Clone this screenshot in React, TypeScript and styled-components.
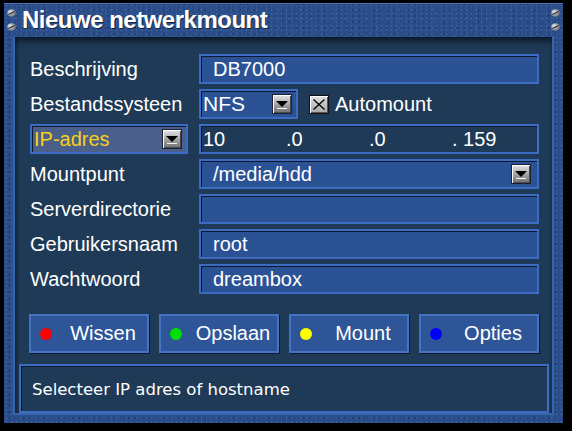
import styled, { createGlobalStyle } from "styled-components";

const GlobalStyle = createGlobalStyle`
  html, body {
    margin: 0;
    padding: 0;
    background: #000;
  }
  body {
    font-family: "Liberation Sans", Arial, sans-serif;
    color: #fff;
  }
`;

const Window = styled.div`
  width: 559px;
  height: 420px;
  margin: 3px 0 0 4px;
  box-sizing: border-box;
  padding: 0 9px 8px 9px;
  display: flex;
  flex-direction: column;
  background-color: #2a4e8b;
  background-image: radial-gradient(rgba(255, 255, 255, 0.1) 1px, transparent 1.2px),
    radial-gradient(rgba(0, 0, 0, 0.22) 1px, transparent 1.3px),
    radial-gradient(rgba(120, 160, 230, 0.12) 1px, transparent 1.5px);
  background-size: 5px 4px, 7px 6px, 11px 9px;
  background-position: 0 0, 2px 3px, 5px 1px;
  border-top: 1px solid #4a72b4;
`;

const TitleBar = styled.div`
  height: 33px;
  display: flex;
  align-items: flex-start;
  margin: 0 -6px;
`;

const ScrewColumn = styled.div`
  width: 9px;
  display: flex;
  flex-direction: column;
  gap: 6px;
  padding-top: 5px;
`;

const Title = styled.h1`
  flex: 1;
  margin: 0 0 0 6px;
  padding-top: 3px;
  font-size: 24px;
  line-height: 26px;
  font-weight: bold;
  letter-spacing: -0.5px;
  color: #fff;
  text-shadow: 1px 1px 0 rgba(0, 0, 0, 0.5);
`;

const Panel = styled.div`
  flex: 1;
  display: flex;
  flex-direction: column;
  background: #1f3a56;
  border: 2px solid #3865ad;
  border-top: none;
  padding: 17px 13px 0 15px;
  box-shadow: inset 0 7px 7px -3px rgba(5, 12, 25, 0.75), inset 2px 0 3px rgba(5, 12, 25, 0.4);
`;

const Form = styled.div`
  display: grid;
  grid-template-columns: 169px 340px;
  grid-auto-rows: 30px;
  row-gap: 5px;
`;

const Label = styled.div`
  font-size: 20px;
  line-height: 30px;
  white-space: nowrap;
  color: #fff;
`;

const Field = styled.div<{ $dark?: boolean }>`
  box-sizing: border-box;
  height: 30px;
  min-width: 0;
  display: flex;
  align-items: center;
  border: 2px solid #3c6cc2;
  background: ${(p) => (p.$dark ? "#1f3a56" : "#2c5296")};
  box-shadow: inset 1px 1px 0 #0b1830;
  padding: 0 6px 0 12px;
  font-size: 20px;
  line-height: 26px;
  color: #fff;
`;

const FieldText = styled.span`
  flex: 1;
  white-space: nowrap;
`;

const InlineRow = styled.div`
  display: flex;
  align-items: center;
`;

const Select = styled.div<{ $width: number; $active?: boolean }>`
  box-sizing: border-box;
  width: ${(p) => p.$width}px;
  height: 30px;
  display: flex;
  align-items: center;
  border: 2px solid #3c6cc2;
  background: ${(p) => (p.$active ? "#4a5f89" : "#2c5296")};
  box-shadow: inset 1px 1px 0 #0b1830;
  padding: 0 4px 0 2px;
`;

const SelectText = styled.span<{ $narrow?: boolean; $active?: boolean }>`
  flex: 1;
  font-family: ${(p) =>
    p.$narrow
      ? `"Liberation Sans Narrow", "Liberation Sans", Arial, sans-serif`
      : `"Liberation Sans", Arial, sans-serif`};
  font-size: ${(p) => (p.$narrow ? "21px" : "20px")};
  line-height: 26px;
  color: ${(p) => (p.$active ? "#f7d117" : "#fff")};
  white-space: nowrap;
`;

const ArrowButton = styled.span`
  box-sizing: border-box;
  width: 20px;
  height: 20px;
  display: flex;
  align-items: center;
  justify-content: center;
  border: 1px solid #1a2233;
  background: linear-gradient(#e6e6e6, #9a9a9a 60%, #6e6e6e);
  box-shadow: inset 1px 1px 0 #fff, inset -1px -1px 0 #4a4a4a;
`;

const CheckBox = styled.span`
  box-sizing: border-box;
  width: 20px;
  height: 19px;
  margin-left: 11px;
  display: flex;
  align-items: center;
  justify-content: center;
  border: 1px solid #111;
  background: linear-gradient(#e0e0e0, #a8a8a8);
  box-shadow: inset 1px 1px 0 #fff, inset -1px -1px 0 #555;
`;

const CheckLabel = styled.span`
  margin-left: 6px;
  font-size: 20px;
  line-height: 30px;
  color: #fff;
`;

const IpGrid = styled.div`
  flex: 1;
  min-width: 0;
  display: grid;
  grid-template-columns: 83px 83px 83px 1fr;
  margin-left: -10px;
`;

const ButtonRow = styled.div`
  display: flex;
  gap: 10px;
  margin: 20px 0 0 -1px;
`;

const Button = styled.div`
  box-sizing: border-box;
  width: 120px;
  height: 39px;
  display: flex;
  align-items: center;
  padding-left: 9px;
  background: #2e5598;
  border: 2px solid #4473c4;
  box-shadow: 1px 1px 0 #0c1a2d;
  font-size: 20px;
  color: #fff;
`;

const Dot = styled.span<{ $color: string }>`
  width: 12px;
  height: 12px;
  border-radius: 50%;
  background: ${(p) => p.$color};
  flex-shrink: 0;
`;

const ButtonText = styled.span`
  flex: 1;
  text-align: center;
  padding-left: 7px;
  white-space: nowrap;
`;

const StatusBar = styled.div`
  box-sizing: border-box;
  height: 49px;
  margin: 11px -10px 0 -11px;
  display: flex;
  align-items: center;
  padding: 2px 0 0 11px;
  border: 2px solid #3c6cc2;
  background: #1f3a56;
  box-shadow: inset 1px 1px 0 #0b1830;
  font-family: "DejaVu Sans", Verdana, sans-serif;
  font-size: 16.5px;
  color: #fff;
`;

function Screw() {
  return (
    <svg width="9" height="8" viewBox="0 0 9 8">
      <defs>
        <radialGradient id="sg" cx="35%" cy="35%" r="70%">
          <stop offset="0" stopColor="#e8e8e8" />
          <stop offset="1" stopColor="#6c7480" />
        </radialGradient>
      </defs>
      <ellipse cx="4.5" cy="4" rx="4.2" ry="3.7" fill="url(#sg)" />
      <line x1="1.5" y1="5.5" x2="7.5" y2="2.5" stroke="#2a3040" strokeWidth="1.3" />
    </svg>
  );
}

function Arrow() {
  return (
    <ArrowButton>
      <svg width="12" height="9" viewBox="0 0 12 9">
        <polygon points="0,1 12,1 6,7" fill="#000" />
        <line x1="1" y1="8.5" x2="11" y2="8.5" stroke="#f4f4f4" strokeWidth="1" />
      </svg>
    </ArrowButton>
  );
}

const buttons = [
  { label: "Wissen", color: "#ff0000" },
  { label: "Opslaan", color: "#00e000" },
  { label: "Mount", color: "#ffff00" },
  { label: "Opties", color: "#0000ff" },
];

export default function App() {
  return (
    <>
      <GlobalStyle />
      <Window>
        <TitleBar>
          <ScrewColumn>
            <Screw />
            <Screw />
          </ScrewColumn>
          <Title>Nieuwe netwerkmount</Title>
          <ScrewColumn>
            <Screw />
            <Screw />
          </ScrewColumn>
        </TitleBar>
        <Panel>
          <Form>
            <Label>Beschrijving</Label>
            <Field>
              <FieldText>DB7000</FieldText>
            </Field>

            <Label>Bestandssysteen</Label>
            <InlineRow>
              <Select $width={99}>
                <SelectText $narrow>NFS</SelectText>
                <Arrow />
              </Select>
              <CheckBox>
                <svg width="14" height="13" viewBox="0 0 14 13">
                  <line x1="1.5" y1="1.5" x2="12.5" y2="11.5" stroke="#000" strokeWidth="1.3" />
                  <line x1="12.5" y1="1.5" x2="1.5" y2="11.5" stroke="#000" strokeWidth="1.3" />
                </svg>
              </CheckBox>
              <CheckLabel>Automount</CheckLabel>
            </InlineRow>

            <Select $width={158} $active>
              <SelectText $active>IP-adres</SelectText>
              <Arrow />
            </Select>
            <Field $dark>
              <IpGrid>
                <span>10</span>
                <span>.0</span>
                <span>.0</span>
                <span>. 159</span>
              </IpGrid>
            </Field>

            <Label>Mountpunt</Label>
            <Field>
              <FieldText>/media/hdd</FieldText>
              <Arrow />
            </Field>

            <Label>Serverdirectorie</Label>
            <Field />

            <Label>Gebruikersnaam</Label>
            <Field>
              <FieldText>root</FieldText>
            </Field>

            <Label>Wachtwoord</Label>
            <Field>
              <FieldText>dreambox</FieldText>
            </Field>
          </Form>

          <ButtonRow>
            {buttons.map((b) => (
              <Button key={b.label}>
                <Dot $color={b.color} />
                <ButtonText>{b.label}</ButtonText>
              </Button>
            ))}
          </ButtonRow>

          <StatusBar>Selecteer IP adres of hostname</StatusBar>
        </Panel>
      </Window>
    </>
  );
}
